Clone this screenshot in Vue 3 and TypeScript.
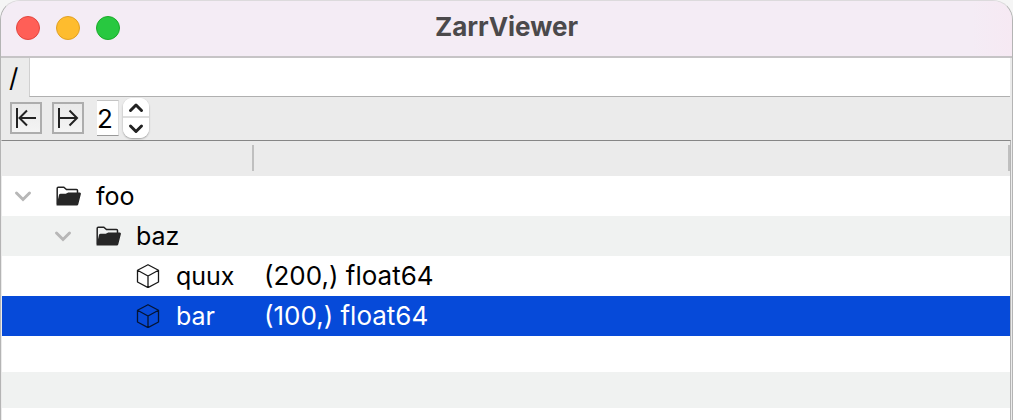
<script setup lang="ts">
import { computed, ref } from 'vue'

interface TreeItem {
  id: string
  name: string
  info: string
  kind: 'group' | 'array'
  level: number
  parents: string[]
}

const items: TreeItem[] = [
  { id: 'foo', name: 'foo', info: '', kind: 'group', level: 0, parents: [] },
  { id: 'baz', name: 'baz', info: '', kind: 'group', level: 1, parents: ['foo'] },
  { id: 'quux', name: 'quux', info: '(200,) float64', kind: 'array', level: 2, parents: ['foo', 'baz'] },
  { id: 'bar', name: 'bar', info: '(100,) float64', kind: 'array', level: 2, parents: ['foo', 'baz'] },
]

const path = ref('')
const depth = ref('2')
const selected = ref('bar')
const collapsed = ref<string[]>([])

const visible = computed(() => items.filter((item) => !item.parents.some((id) => collapsed.value.includes(id))))

function toggle(id: string) {
  collapsed.value = collapsed.value.includes(id)
    ? collapsed.value.filter((other) => other !== id)
    : [...collapsed.value, id]
}

function collapseAll() {
  collapsed.value = items.filter((item) => item.kind === 'group').map((item) => item.id)
}

function expandAll() {
  collapsed.value = []
}

function step(delta: number) {
  depth.value = String(Math.max(0, Number(depth.value) + delta))
}
</script>

<template>
  <main class="window">
    <header class="titlebar">
      <div class="lights">
        <button class="light close" type="button" aria-label="Close"></button>
        <button class="light minimize" type="button" aria-label="Minimize"></button>
        <button class="light maximize" type="button" aria-label="Zoom"></button>
      </div>
      <h1 class="title">ZarrViewer</h1>
    </header>

    <div class="pathbar">
      <label class="root" for="path">/</label>
      <input id="path" v-model="path" class="path" type="text" />
    </div>

    <div class="toolbar">
      <button class="tool" type="button" aria-label="Collapse all" @click="collapseAll">
        <svg viewBox="0 0 28 28" class="tool-icon">
          <path d="M5 4V24M24 14H7.500M15 6.500L7.500 14L15 21.500" />
        </svg>
      </button>
      <button class="tool" type="button" aria-label="Expand all" @click="expandAll">
        <svg viewBox="0 0 28 28" class="tool-icon">
          <path d="M5 4V24M5 14H23M15.500 6.500L23 14L15.500 21.500" />
        </svg>
      </button>
      <input v-model="depth" class="depth" type="text" inputmode="numeric" aria-label="Expand depth" />
      <div class="stepper">
        <button class="step" type="button" aria-label="Increase depth" @click="step(1)">
          <svg viewBox="0 0 26 19" class="step-icon"><path d="M7.500 12.500L13 7L18.500 12.500" /></svg>
        </button>
        <button class="step" type="button" aria-label="Decrease depth" @click="step(-1)">
          <svg viewBox="0 0 26 19" class="step-icon"><path d="M7.500 7L13 12.500L18.500 7" /></svg>
        </button>
      </div>
    </div>

    <div class="tree-frame">
      <table class="tree">
        <colgroup>
          <col class="name-col" />
          <col />
        </colgroup>
        <thead>
          <tr>
            <th scope="col" aria-label="Name"><div class="heading"></div></th>
            <th scope="col" aria-label="Type"><div class="heading"></div></th>
          </tr>
        </thead>
        <tbody>
          <tr
            v-for="item in visible"
            :key="item.id"
            class="row"
            :class="{ selected: selected === item.id }"
            @click="selected = item.id"
          >
            <td>
              <div class="node" :class="`level-${item.level}`">
                <span class="disclosure">
                  <button
                    v-if="item.kind === 'group'"
                    class="toggle"
                    type="button"
                    :aria-label="`Toggle ${item.name}`"
                    :aria-expanded="!collapsed.includes(item.id)"
                    @click.stop="toggle(item.id)"
                  >
                    <svg viewBox="0 0 18 18" class="chevron"><path d="M2.500 6L9 12.500L15.500 6" /></svg>
                  </button>
                </span>
                <svg v-if="item.kind === 'group'" class="icon" viewBox="0 0 26 24">
                  <path
                    class="folder-back"
                    d="M1.200 20.500V4.200Q1.200 3.200 2.200 3.200H7.800L10.500 5.600H20.500Q21.500 5.600 21.500 6.600V9"
                  />
                  <path
                    class="folder-front"
                    d="M0.500 21.500L3 11Q3.300 9.800 4.600 9.800H9.800L12.200 8.500H23.700Q25.300 8.500 24.900 10L22.300 20.200Q22 21.500 20.800 21.500Z"
                  />
                </svg>
                <svg v-else class="icon" viewBox="0 0 26 24">
                  <path class="cube" d="M12 0.700L22.500 6.300V18L12 23.600L1.500 18V6.300ZM1.500 6.300L12 12L22.500 6.300M12 12V23.600" />
                </svg>
                <span class="name">{{ item.name }}</span>
              </div>
            </td>
            <td class="info">{{ item.info }}</td>
          </tr>
          <tr v-for="n in 3" :key="`empty-${n}`" class="row empty">
            <td></td>
            <td></td>
          </tr>
        </tbody>
      </table>
    </div>
  </main>
</template>

<style>
body {
  margin: 0;
  background: #f5f5f5;
}
</style>

<style scoped>
.window {
  box-sizing: border-box;
  height: 100vh;
  overflow: hidden;
  border: 1px solid #b4b4b4;
  border-top-color: #dcdadc;
  border-bottom: 0;
  border-radius: 20px 20px 0 0;
  background: #ebebeb;
  color: #000;
  font: 25px/40px Inter, 'Liberation Sans', sans-serif;
}

button,
input {
  box-sizing: border-box;
  margin: 0;
  padding: 0;
  border: 0;
  border-radius: 0;
  outline: 0;
  color: inherit;
  font: inherit;
}

svg {
  display: block;
  fill: none;
}

.titlebar {
  box-sizing: border-box;
  display: grid;
  grid-template-columns: 1fr auto 1fr;
  align-items: center;
  height: 57px;
  padding-bottom: 2px;
  border-bottom: 2px solid #c6c4c6;
  background: linear-gradient(90deg, #f4ecf5 96%, #f6e9f3);
}

.lights {
  display: flex;
  gap: 16px;
  padding-left: 15px;
}

.light {
  width: 24px;
  height: 24px;
  border: 1px solid;
  border-radius: 50%;
}

.close {
  border-color: #e2463f;
  background: #ff5f57;
}

.minimize {
  border-color: #e0a024;
  background: #febc2e;
}

.maximize {
  border-color: #1aab29;
  background: #28c840;
}

.title {
  margin: 0;
  padding-bottom: 2px;
  color: #4b494b;
  font-size: 26px;
  font-weight: 700;
}

.pathbar {
  display: flex;
  height: 40px;
  padding-right: 2px;
}

.root {
  box-sizing: border-box;
  width: 28px;
  padding-left: 8px;
  font-size: 26px;
}

.path {
  flex: 1;
  min-width: 0;
  height: 39px;
  padding: 0 6px;
  border-bottom: 1px solid #b0b0b0;
  border-left: 1px solid #d0d0d0;
  background: #fff;
}

.toolbar {
  box-sizing: border-box;
  display: flex;
  align-items: center;
  height: 42px;
  padding: 0 0 2px 9px;
}

.tool {
  width: 32px;
  height: 32px;
  margin-right: 10px;
  border: 2px solid #adadad;
  background: linear-gradient(#e9e9e9, #f4f4f4);
}

.tool-icon {
  width: 28px;
  height: 28px;
  stroke: #222;
  stroke-width: 2;
}

.depth {
  width: 22px;
  height: 36px;
  margin: 0 4px 0 3px;
  padding-top: 2px;
  border-top: 1px solid #c4c4c4;
  border-right: 1px solid #dcdcdc;
  border-bottom: 1px solid #999;
  background: #fff;
  font-size: 26px;
}

.stepper {
  width: 26px;
  overflow: hidden;
  border-radius: 9px;
  background: #fff;
  box-shadow: 0 1px 2px #0005;
}

.step {
  display: block;
  width: 26px;
  height: 20px;
  background: #fff;
}

.step:first-child {
  border-bottom: 2px solid #dedede;
}

.step-icon {
  width: 26px;
  height: 19px;
  stroke: #222;
  stroke-width: 3;
  stroke-linecap: round;
  stroke-linejoin: round;
}

.tree-frame {
  padding-right: 1px;
}

.tree {
  width: 100%;
  border: 1px solid #b4b4b4;
  border-top-color: #868686;
  border-bottom: 0;
  border-left: 1px solid #ebebeb;
  border-spacing: 0;
  table-layout: fixed;
  background: #fff;
}

.name-col {
  width: 252px;
}

th {
  height: 35px;
  padding: 0;
  background: #ebebeb;
}

.heading {
  height: 26px;
  margin-bottom: 2px;
  border-right: 2px solid #bfbfbf;
}

td {
  height: 40px;
  padding: 0;
}

.row:nth-child(even) {
  background: #f0f2f1;
}

.row.selected {
  background: #064ad9;
  color: #fff;
}

.empty td {
  height: 36px;
}

.node {
  display: flex;
  align-items: center;
  padding-left: 12px;
}

.level-1 {
  padding-left: 52px;
}

.level-2 {
  padding-left: 92px;
}

.disclosure {
  width: 18px;
  margin-right: 24px;
}

.toggle {
  display: block;
  width: 18px;
  height: 18px;
  background: none;
}

.chevron {
  width: 18px;
  height: 18px;
  stroke: #b7b7b7;
  stroke-width: 3;
  stroke-linecap: round;
}

.icon {
  width: 26px;
  height: 24px;
  margin-right: 14px;
}

.folder-back {
  stroke: #222;
  stroke-width: 1.500;
}

.folder-front {
  fill: #262626;
}

.cube {
  stroke: #181818;
  stroke-width: 1.300;
  stroke-linejoin: round;
}

.selected .cube {
  stroke: #051433;
}

.info {
  padding-left: 10px;
  font-size: 26px;
}
</style>
